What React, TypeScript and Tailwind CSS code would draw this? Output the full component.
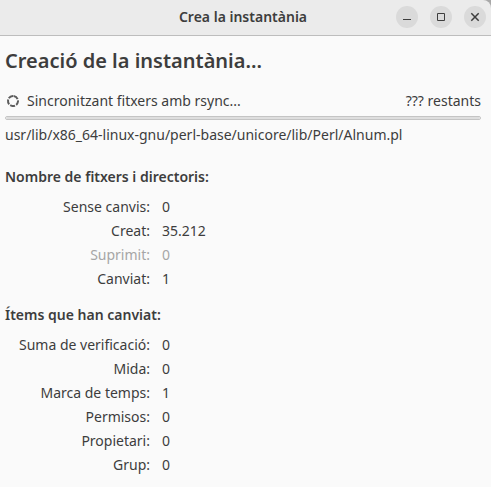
type Row = { label: string; value: string; dim?: boolean };

const files: Row[] = [
  { label: "Sense canvis:", value: "0" },
  { label: "Creat:", value: "35.212" },
  { label: "Suprimit:", value: "0", dim: true },
  { label: "Canviat:", value: "1" },
];

const items: Row[] = [
  { label: "Suma de verificació:", value: "0" },
  { label: "Mida:", value: "0" },
  { label: "Marca de temps:", value: "1" },
  { label: "Permisos:", value: "0" },
  { label: "Propietari:", value: "0" },
  { label: "Grup:", value: "0" },
];

function Stats({ title, rows }: { title: string; rows: Row[] }) {
  return (
    <section className="mt-3">
      <h2 className="text-sm leading-6 font-semibold">{title}</h2>
      <table className="mt-1.5 w-full table-fixed text-sm">
        <tbody>
          {rows.map((row) => (
            <tr key={row.label} className={row.dim ? "text-[#a6a6a6]" : ""}>
              <th scope="row" className="w-[145px] p-0 text-right leading-6 font-normal whitespace-nowrap">
                {row.label}
              </th>
              <td className="py-0 pr-0 pl-3 leading-6">{row.value}</td>
            </tr>
          ))}
        </tbody>
      </table>
    </section>
  );
}

function Spinner() {
  return (
    <svg viewBox="0 0 16 16" className="size-4" fill="none" strokeWidth="2" aria-hidden="true">
      <circle cx="8" cy="8" r="5" stroke="#5c5c5c" strokeDasharray="5 1.283" transform="rotate(-82 8 8)" />
    </svg>
  );
}

const controlClass = "grid size-[22px] place-items-center rounded-full bg-[#dadada]";

export default function App() {
  return (
    <div className="min-h-screen bg-[#fafafa] font-['Noto_Sans',sans-serif] text-[#3d3d3d]">
      <div className="bg-[#a8a8a8]">
        <header className="grid h-9 grid-cols-[1fr_auto_1fr] items-center rounded-tr-lg border-b border-[#bdbdbd] bg-[#ebebeb] pr-[5px] pb-px">
          <h1 className="col-start-2 text-sm font-semibold">Crea la instantània</h1>
          <div className="flex justify-end gap-3">
            <button type="button" aria-label="Minimitza" className={controlClass}>
              <svg viewBox="0 0 22 22" className="size-[22px]" fill="none" stroke="#3d3d3d">
                <path d="M7 13.5h8" />
              </svg>
            </button>
            <button type="button" aria-label="Maximitza" className={controlClass}>
              <svg viewBox="0 0 22 22" className="size-[22px]" fill="none" stroke="#3d3d3d">
                <path d="M7.5 7.5h7v7h-7z" />
              </svg>
            </button>
            <button type="button" aria-label="Tanca" className={controlClass}>
              <svg viewBox="0 0 22 22" className="size-[22px]" fill="none" stroke="#3d3d3d" strokeWidth="1.5">
                <path d="M7.3 7.3l7.4 7.4M14.7 7.3l-7.4 7.4" />
              </svg>
            </button>
          </div>
        </header>
      </div>
      <main className="px-[5px] pt-[9px]">
        <h2 className="text-xl leading-8 font-semibold">Creació de la instantània...</h2>
        <div className="mt-3 flex items-center gap-1.5 text-sm leading-6">
          <Spinner />
          <label htmlFor="sync">Sincronitzant fitxers amb rsync...</label>
          <span className="ml-auto pr-[5px]">??? restants</span>
        </div>
        <div className="pr-[5px]">
          <progress
            id="sync"
            max={100}
            value={0}
            className="mt-[3px] block h-1 w-full appearance-none overflow-hidden rounded-full border border-[#c4c4c4] bg-[#dedede] [&::-webkit-progress-bar]:bg-[#dedede]"
          />
        </div>
        <p className="mt-[3px] pb-1.5 text-sm leading-6">
          usr/lib/x86_64-linux-gnu/perl-base/unicore/lib/Perl/Alnum.pl
        </p>
        <Stats title="Nombre de fitxers i directoris:" rows={files} />
        <Stats title="Ítems que han canviat:" rows={items} />
      </main>
    </div>
  );
}
